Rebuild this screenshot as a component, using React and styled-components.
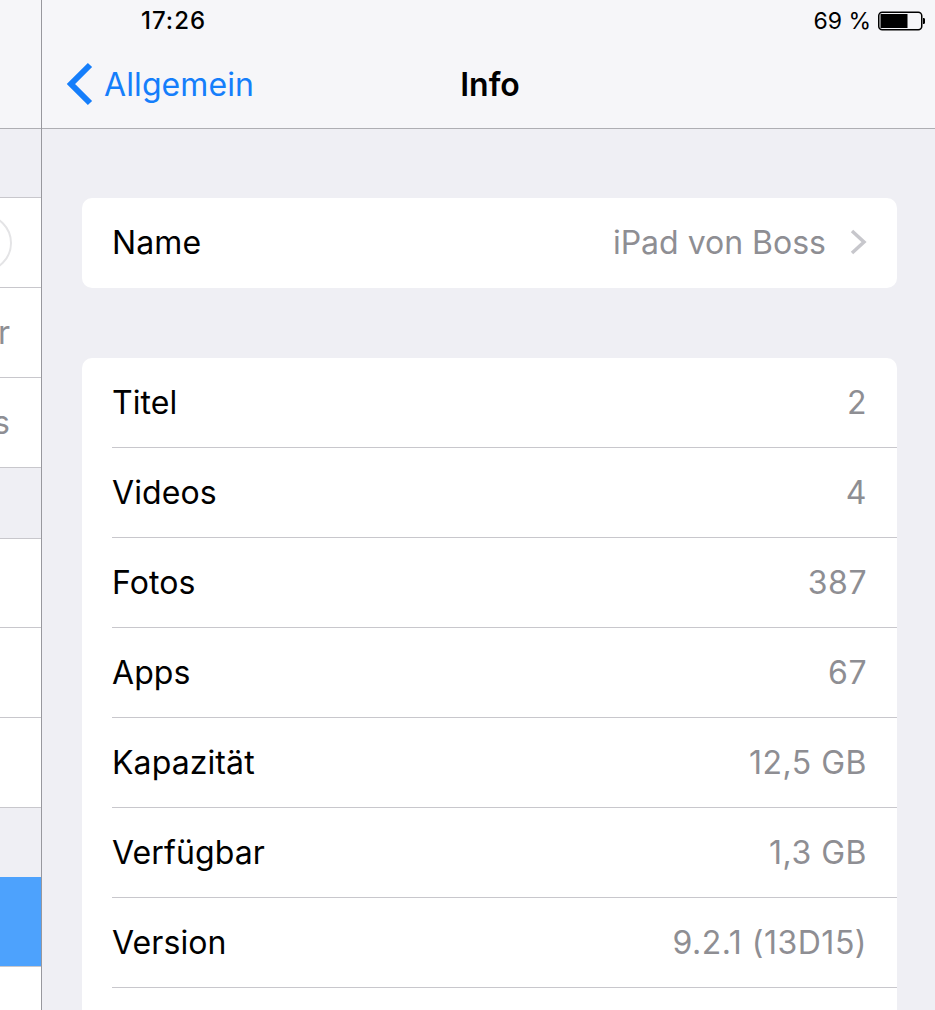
import styled, { createGlobalStyle } from "styled-components";

const GlobalStyle = createGlobalStyle`
  html, body {
    margin: 0;
    padding: 0;
    background: #efeff4;
  }
  * {
    box-sizing: border-box;
  }
`;

const Screen = styled.div`
  display: flex;
  width: 935px;
  height: 1010px;
  overflow: hidden;
  font-family: Inter, "Liberation Sans", sans-serif;
  background: #efeff4;
`;

//master list, only its right edge is still visible
const Sidebar = styled.div`
  flex: 0 0 42px;
  height: 100%;
  overflow: hidden;
  border-right: 1px solid #98989e;
`;

const SideHeader = styled.div`
  height: 129px;
  background: #f6f6f9;
  border-bottom: 1px solid #aeaeb3;
`;

const SideGap = styled.div`
  height: ${(p) => p.$h}px;
`;

const SideRow = styled.div`
  height: ${(p) => p.$h || 90}px;
  display: flex;
  align-items: center;
  justify-content: flex-end;
  padding-right: 31px;
  background: ${(p) => (p.$active ? "#4da2fd" : "#fff")};
  border-bottom: 1px solid #c8c7cc;
  border-top: ${(p) => (p.$first ? "1px solid #c8c7cc" : "none")};
  color: #8e8e93;
  font-size: 32px;
  white-space: nowrap;
`;

const SideCircle = styled.div`
  flex: none;
  width: 58px;
  height: 58px;
  margin-right: -2px;
  border: 2px solid #e4e4e6;
  border-radius: 50%;
`;

const Main = styled.div`
  flex: 1;
  min-width: 0;
`;

const TopBar = styled.div`
  height: 129px;
  background: #f6f6f9;
  border-bottom: 1px solid #aeaeb3;
`;

const StatusBar = styled.div`
  height: 41px;
  display: flex;
  align-items: center;
  justify-content: space-between;
  padding: 0 10px 0 99px;
  color: #000;
`;

const Time = styled.div`
  font-size: 24px;
  font-weight: 500;
  letter-spacing: 1px;
`;

const BatteryWrap = styled.div`
  display: flex;
  align-items: center;
  gap: 6px;
  font-size: 23px;
`;

const NavBar = styled.div`
  position: relative;
  height: 87px;
  display: flex;
  align-items: center;
  justify-content: center;
`;

const BackLink = styled.div`
  position: absolute;
  left: 24px;
  top: 21px;
  display: flex;
  align-items: center;
  gap: 11px;
  color: #157efb;
  font-size: 32px;
  letter-spacing: 0.1px;
`;

const NavTitle = styled.div`
  font-size: 32px;
  font-weight: 600;
  color: #000;
  margin-left: 3px;
`;

const Content = styled.div`
  display: flex;
  flex-direction: column;
  gap: 70px;
  padding: 69px 38px 0 40px;
`;

const Group = styled.div`
  background: #fff;
  border-radius: 10px;
  padding-left: 30px;
`;

const Row = styled.div`
  height: 90px;
  display: flex;
  align-items: center;
  justify-content: space-between;
  padding-right: 30px;
  padding-bottom: ${(p) => (p.$last ? "2px" : "0")};
  border-bottom: ${(p) => (p.$last ? "none" : "1px solid #c8c7cc")};
  font-size: 32px;
  letter-spacing: 0.1px;
  color: #000;
`;

const Value = styled.div`
  display: flex;
  align-items: center;
  gap: 24px;
  color: #8e8e93;
  letter-spacing: ${(p) => (p.$numeric ? "0.5px" : "0")};
`;

function BackChevron() {
  return (
    <svg width="27" height="44" viewBox="0 0 27 44">
      <path d="M24 3 L5 22 L24 41" fill="none" stroke="#157efb" strokeWidth="6" />
    </svg>
  );
}

function RowChevron() {
  return (
    <svg width="17" height="26" viewBox="0 0 17 26">
      <path d="M2 2 L14 13 L2 24" fill="none" stroke="#c7c7cc" strokeWidth="3.5" />
    </svg>
  );
}

function Battery() {
  return (
    <svg width="48" height="20" viewBox="0 0 48 20">
      <rect x="1.75" y="1.25" width="43" height="17.5" rx="3.5" fill="none" stroke="#000" strokeWidth="1.5" />
      <rect x="3.5" y="3" width="27" height="14" fill="#000" />
      <path d="M46 7 h1 a1.5 1.5 0 0 1 1 1.5 v3 a1.5 1.5 0 0 1 -1 1.5 h-1 z" fill="#000" />
    </svg>
  );
}

const infoRows = [
  ["Titel", "2"],
  ["Videos", "4"],
  ["Fotos", "387"],
  ["Apps", "67"],
  ["Kapazität", "12,5 GB"],
  ["Verfügbar", "1,3 GB"],
  ["Version", "9.2.1 (13D15)"],
  ["", ""],
];

export default function App() {
  return (
    <Screen>
      <GlobalStyle />
      <Sidebar>
        <SideHeader />
        <SideGap $h={68} />
        <SideRow $first $h={91}>
          <SideCircle />
        </SideRow>
        <SideRow>r</SideRow>
        <SideRow>s</SideRow>
        <SideGap $h={70} />
        <SideRow $first />
        <SideRow />
        <SideRow />
        <SideGap $h={69} />
        <SideRow $active />
        <SideRow />
      </Sidebar>
      <Main>
        <TopBar>
          <StatusBar>
            <Time>17:26</Time>
            <BatteryWrap>
              69 %
              <Battery />
            </BatteryWrap>
          </StatusBar>
          <NavBar>
            <BackLink>
              <BackChevron />
              Allgemein
            </BackLink>
            <NavTitle>Info</NavTitle>
          </NavBar>
        </TopBar>
        <Content>
          <Group>
            <Row $last>
              Name
              <Value>
                iPad von Boss
                <RowChevron />
              </Value>
            </Row>
          </Group>
          <Group>
            {infoRows.map(([label, value]) => (
              <Row key={label}>
                {label}
                <Value $numeric>{value}</Value>
              </Row>
            ))}
          </Group>
        </Content>
      </Main>
    </Screen>
  );
}
